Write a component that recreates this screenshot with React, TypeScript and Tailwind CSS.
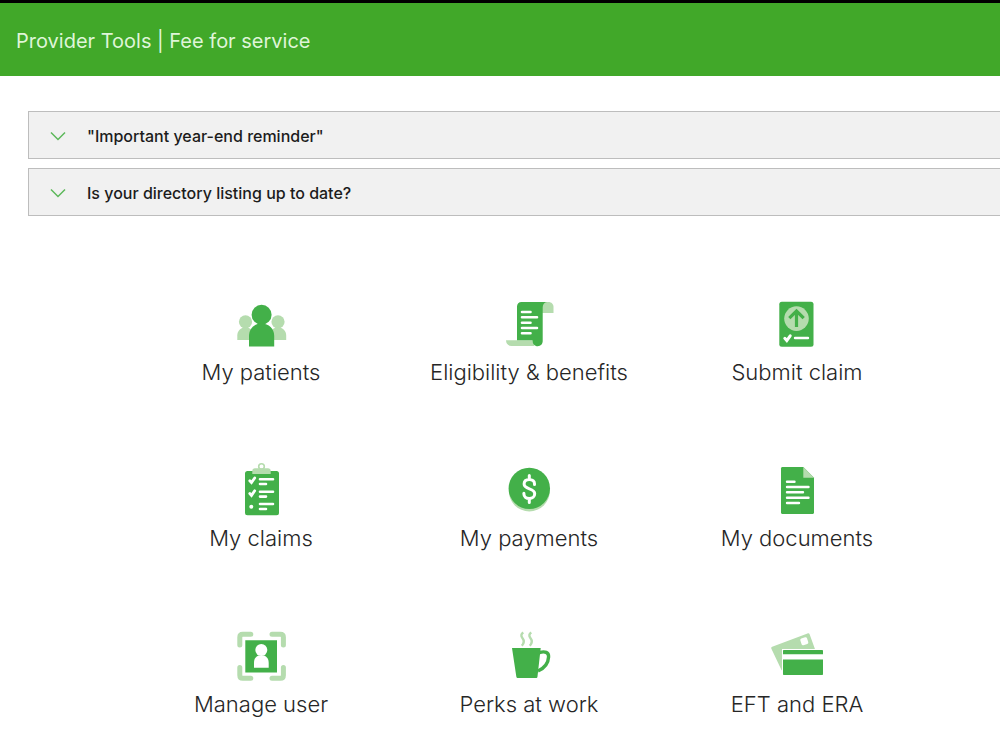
import type { ReactNode } from "react";

const notices = [
  { id: "year-end", title: '"Important year-end reminder"' },
  { id: "directory", title: "Is your directory listing up to date?" },
];

const DARK = "#43b049";
const LIGHT = "#b5dcae";

const PatientsIcon = () => (
  <>
    <g fill={LIGHT}>
      <circle cx="14.5" cy="25.8" r="6.6" />
      <path d="M6.3 44v-4.5c0-4.6 3.4-8 8.2-8s8.2 3.4 8.2 8V44z" />
      <circle cx="47" cy="25.8" r="6.6" />
      <path d="M38.8 44v-4.5c0-4.6 3.4-8 8.2-8s8.2 3.4 8.2 8V44z" />
    </g>
    <g fill={DARK}>
      <circle cx="30.6" cy="18.8" r="10" />
      <path d="M18 50.5V40c0-7.5 5.4-12.5 12.6-12.5S43.2 32.5 43.2 40v10.500z" />
    </g>
  </>
);

const EligibilityIcon = () => (
  <>
    <path fill={LIGHT} d="M43 6h6.5c3 0 5 2.2 5 5v6H43z" />
    <path fill={LIGHT} d="M7 44.3h28V50H12.5C9 50 7 47.6 7 44.3z" />
    <path
      fill={DARK}
      d="M22.5 6H48c-2.8.4-4.3 2.6-4.3 5.5V45c0 3-2 5.2-5 5.2s-5-2.2-5-5l-.2-.9H18V10.5C18 7.8 19.8 6 22.5 6z"
    />
    <path
      stroke="#fff"
      strokeWidth="2.6"
      strokeLinecap="round"
      d="M23 16h8.5M23 21.3h15M23 26.7h8.5M23 32h15M23 37.3h8.500"
    />
  </>
);

const SubmitIcon = () => (
  <>
    <rect x="12.3" y="5.7" width="34.2" height="45" rx="2.5" fill={DARK} />
    <circle cx="29.5" cy="22.6" r="12.3" fill={LIGHT} />
    <path
      fill="none"
      stroke={DARK}
      strokeWidth="3.2"
      d="M29.5 31V15M22.3 22.2l7.2-7.2 7.2 7.2"
    />
    <path
      fill="none"
      stroke="#fff"
      strokeWidth="3"
      strokeLinecap="round"
      d="M17.8 42.3l2 2.3 3.4-4.8"
    />
    <path stroke="#fff" strokeWidth="2.4" strokeLinecap="round" d="M28 42h13" />
  </>
);

const ClaimsIcon = () => (
  <>
    <rect x="14" y="9" width="34" height="44.3" rx="2.5" fill={DARK} />
    <path fill={LIGHT} d="M21.3 12V9c0-1.7 1-2.7 2.7-2.7h13c1.7 0 2.7 1 2.7 2.7v3z" />
    <circle cx="30.5" cy="4.6" r="2.8" fill="none" stroke={LIGHT} strokeWidth="1.6" />
    <path
      fill="none"
      stroke="#fff"
      strokeWidth="2.8"
      strokeLinecap="round"
      d="M18.8 18.7l1.7 1.9 3.2-4.6M18.8 31.5l1.7 1.9 3.2-4.6"
    />
    <circle cx="20.3" cy="44.7" r="2" fill="#fff" />
    <path
      stroke="#fff"
      strokeWidth="2.6"
      strokeLinecap="round"
      d="M29 17.3h13M29 22h6M29 29.7h13M29 34.6h6M29 42h13M29 47h6"
    />
  </>
);

const PaymentsIcon = () => (
  <>
    <circle cx="30.3" cy="28.9" r="20.5" fill={LIGHT} />
    <circle cx="30.3" cy="26.4" r="20.7" fill={DARK} />
    <path
      fill="none"
      stroke="#fff"
      strokeWidth="3"
      strokeLinecap="round"
      d="M30.3 13.5v4M30.3 36.5v4M35.5 22.5v-.8c0-2.4-2-4.2-5.2-4.2s-5.2 1.8-5.2 4.6c0 6 10.6 3.6 10.6 9.6 0 2.8-2.2 4.8-5.4 4.8s-5.4-1.8-5.4-4.5v-.7"
    />
  </>
);

const DocumentsIcon = () => (
  <>
    <path
      fill={DARK}
      d="M15.5 5h20.8L47 15.7v34.8c0 .9-.6 1.5-1.5 1.5h-30c-.9 0-1.5-.6-1.5-1.5v-44c0-.9.6-1.5 1.5-1.5z"
    />
    <path fill={LIGHT} d="M36.3 5L47 15.7H36.3z" />
    <path
      stroke="#fff"
      strokeWidth="2.4"
      strokeLinecap="round"
      d="M20 19.7h7.5M20 25h21.5M20 30.3h16M20 35.7h21.5M20 41h12"
    />
  </>
);

const ManageIcon = () => (
  <>
    <path
      fill="none"
      stroke={LIGHT}
      strokeWidth="5"
      strokeLinecap="round"
      d="M8.8 17V9.2c0-2 1-3 3-3h8M41 6.200h8.400c2 0 3 1 3 3V17M52.400 39.500v7.800c0 2-1 3-3 3H41M19.800 50.300h-8c-2 0-3-1-3-3v-7.800"
    />
    <path fill={DARK} d="M14.3 12.200H46v32.200H14.300z" />
    <circle cx="30.300" cy="22" r="6" fill="#fff" />
    <path fill="#fff" d="M23 39.700v-5c0-3.500 1.500-6 4.300-7.200h6c2.800 1.200 4.400 3.700 4.400 7.200v5z" />
  </>
);

const PerksIcon = () => (
  <>
    <path
      fill="none"
      stroke={LIGHT}
      strokeWidth="2.4"
      d="M24.3 4.5c-2.3 1.5-2.500 3.300-.9 5.500 2 2.600 2 5-.6 7.800M32.300 4.500c-2.300 1.500-2.500 3.300-.9 5.500 2 2.600 2 5-.6 7.800"
    />
    <path fill={DARK} d="M13 20h28.700l-3.200 28.500c-.1 1-.7 1.500-1.500 1.500H19c-.9 0-1.500-.5-1.700-1.500z" />
    <path
      fill="none"
      stroke={DARK}
      strokeWidth="3.4"
      d="M40.5 24.500c5.600-1.500 9.300-.2 9.100 4.400-.3 6-3.600 11-10.600 14.100"
    />
  </>
);

const CardsIcon = () => (
  <>
    <path
      fill={LIGHT}
      d="M5.200 18.700L40.500 5.400c1-.4 1.900 0 2.200 1L48.300 22H16v20.500l-1.400-.3L4.400 20.800c-.4-1-.1-1.800.8-2.100z"
    />
    <rect x="33.800" y="9.800" width="7" height="7" rx="1.5" fill="#fff" transform="rotate(-18 37.300 13.300)" />
    <path fill="#fff" d="M15 21h42v27H15z" />
    <path
      fill={DARK}
      d="M16 23c0-.6.400-1 1-1h38c.6 0 1 .4 1 1v3.200H16zM16 31.500h40V46c0 .6-.4 1-1 1H17c-.6 0-1-.4-1-1z"
    />
  </>
);

const tools: { name: string; icon: ReactNode }[] = [
  { name: "My patients", icon: <PatientsIcon /> },
  { name: "Eligibility & benefits", icon: <EligibilityIcon /> },
  { name: "Submit claim", icon: <SubmitIcon /> },
  { name: "My claims", icon: <ClaimsIcon /> },
  { name: "My payments", icon: <PaymentsIcon /> },
  { name: "My documents", icon: <DocumentsIcon /> },
  { name: "Manage user", icon: <ManageIcon /> },
  { name: "Perks at work", icon: <PerksIcon /> },
  { name: "EFT and ERA", icon: <CardsIcon /> },
];

const Notice = ({ title }: { title: string }) => (
  <button
    type="button"
    aria-expanded={false}
    className="flex h-12 w-full items-center gap-5 border border-r-0 border-[#bdbdbd] bg-[#f1f1f1] pt-0.5 pl-5 text-left text-base font-medium text-[#1c1c1c]"
  >
    <svg width="18" height="18" viewBox="0 0 18 18" fill="none" stroke="#5cb85a" strokeWidth="1.5" aria-hidden="true">
      <path d="M2 5.5l7 7 7-7" />
    </svg>
    {title}
  </button>
);

const App = () => {
  return (
    <div className="min-h-screen bg-white font-['Inter',sans-serif]">
      <header className="border-t-[3px] border-black bg-[#41a829] px-4 pt-6 pb-[21px]">
        <h1 className="text-xl leading-7 font-normal text-[#dff5d8]">Provider Tools | Fee for service</h1>
      </header>

      <main>
        <section className="flex flex-col gap-[9px] pt-[35px] pl-7" aria-label="Notices">
          {notices.map((notice) => (
            <Notice key={notice.id} title={notice.title} />
          ))}
        </section>

        <nav className="grid grid-cols-3 gap-y-[76px] pt-20 pr-[69px] pb-8 pl-[127px]" aria-label="Provider tools">
          {tools.map((tool) => (
            <a key={tool.name} href="#" className="flex flex-col items-center gap-1.5">
              <svg width="60" height="56" viewBox="0 0 60 56" aria-hidden="true">
                {tool.icon}
              </svg>
              <span className="text-[22px] leading-7 font-light whitespace-nowrap text-[#262626]">{tool.name}</span>
            </a>
          ))}
        </nav>
      </main>
    </div>
  );
};

export default App;
